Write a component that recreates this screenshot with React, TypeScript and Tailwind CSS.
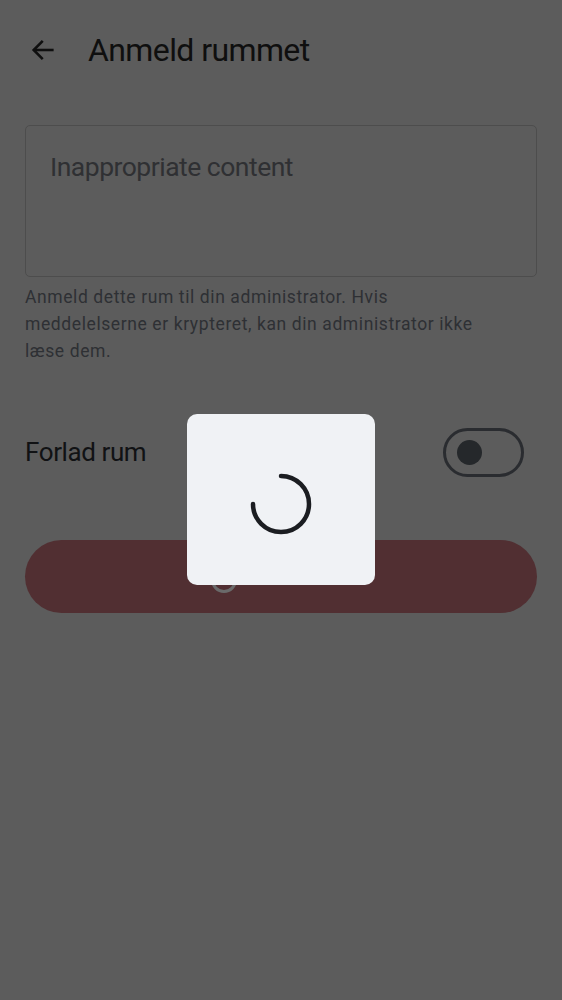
import React from 'react';

const BackArrow: React.FC = () => (
  <svg width="28" height="28" viewBox="0 0 24 24" fill="none" stroke="#0f0f0f" strokeWidth="2.2" strokeLinecap="square">
    <path d="M20 12H5" />
    <path d="M11 5l-7 7 7 7" />
  </svg>
);

const Spinner: React.FC = () => (
  <svg width="68" height="68" viewBox="0 0 68 68" fill="none">
    <path d="M34 6 A28 28 0 1 1 6 34" stroke="#1b1d21" strokeWidth="4.5" strokeLinecap="round" />
  </svg>
);

export default function App() {
  return (
    <div className="relative w-[562px] h-[1000px] overflow-hidden bg-[#5c5c5c] font-['Roboto',sans-serif]">
      <div className="flex items-center h-[100px] pl-[29px]">
        <BackArrow />
        <h1 className="ml-[31px] text-[32px] tracking-[-0.6px] text-[#0f0f0f]">Anmeld rummet</h1>
      </div>

      <div className="px-[25px] pt-[25px]">
        <div className="h-[152px] rounded-[5px] border border-[#4d4d4d] px-[24px] pt-[24px]">
          <p className="text-[26.5px] leading-[34px] tracking-[-0.5px] text-[#2f3033]">Inappropriate content</p>
        </div>
        <p className="mt-[7px] max-w-[470px] text-[17.5px] leading-[27px] tracking-[0.6px] text-[#2e3034]">
          Anmeld dette rum til din administrator. Hvis meddelelserne er krypteret, kan din administrator ikke læse dem.
        </p>

        <div className="mt-[63px] flex items-center justify-between pr-[13px]">
          <span className="text-[26px] tracking-[-0.4px] text-[#111214]">Forlad rum</span>
          <div className="w-[81px] h-[49px] rounded-full border-[3px] border-[#2a2c30] flex items-center pl-[11px]">
            <div className="w-[25px] h-[25px] rounded-full bg-[#25282b]" />
          </div>
        </div>

        <div className="mt-[63px] h-[73px] rounded-full bg-[#512f32] flex items-center pl-[186px] pt-[6px]">
          <div className="w-[26px] h-[26px] rounded-full border-[3px] border-[#6a6a6a]" />
        </div>
      </div>

      <div className="absolute left-[187px] top-[414px] w-[188px] h-[171px] rounded-[10px] bg-[#f0f2f5] flex items-center justify-center pt-[9px]">
        <Spinner />
      </div>
    </div>
  );
}
